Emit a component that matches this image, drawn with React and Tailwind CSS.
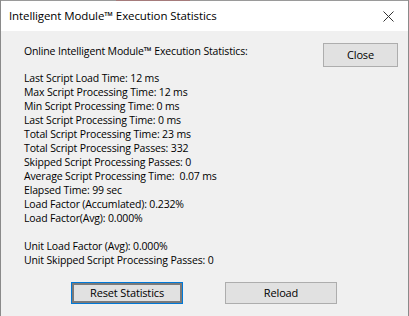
import React from "react";

const stats = [
  "Last Script Load Time: 12 ms",
  "Max Script Processing Time: 12 ms",
  "Min Script Processing Time: 0 ms",
  "Last Script Processing Time: 0 ms",
  "Total Script Processing Time: 23 ms",
  "Total Script Processing Passes: 332",
  "Skipped Script Processing Passes: 0",
  "Average Script Processing Time:  0.07 ms",
  "Elapsed Time: 99 sec",
  "Load Factor (Accumlated): 0.232%",
  "Load Factor(Avg): 0.000%",
];

const unitStats = [
  "Unit Load Factor (Avg): 0.000%",
  "Unit Skipped Script Processing Passes: 0",
];

const App = () => {
  return (
    <div
      className="w-[409px] h-[316px] flex flex-col bg-[#f0f0f0] border-l border-r border-[#8a8a8a] overflow-hidden text-black"
      style={{ fontFamily: '"Open Sans", "Noto Sans", sans-serif' }}
    >
      {/* window top edge */}
      <div className="flex h-px shrink-0">
        <div className="w-[115px] bg-[#9a9a9a]" />
        <div className="w-[74px] bg-[#a57b7b]" />
        <div className="flex-1 bg-[#9a9a9a]" />
      </div>

      <div className="h-[30px] bg-white flex items-center justify-between pl-2 pr-3 shrink-0">
        <span className="text-[11.5px] tracking-[-0.1px]">
          Intelligent Module™ Execution Statistics
        </span>
        <svg width="11" height="11" viewBox="0 0 11 11" className="mr-[2px]">
          <path d="M0.5 0.5 L10.5 10.5 M10.5 0.5 L0.5 10.5" stroke="#333" strokeWidth="1" />
        </svg>
      </div>

      <div className="flex-1 flex flex-col pl-[23px] pr-[10px] text-[10.5px] leading-[14px] tracking-[-0.15px]">
        <div className="flex justify-between items-start mt-[12px]">
          <div className="mt-[1px]">Online Intelligent Module™ Execution Statistics:</div>
          <button className="w-[75px] h-[24px] bg-[#e1e1e1] border border-[#adadad] text-[11px]">
            Close
          </button>
        </div>

        <div className="mt-[4px] flex flex-col">
          {stats.map((s) => (
            <div key={s} className="whitespace-pre">{s}</div>
          ))}
        </div>

        <div className="mt-[14px] flex flex-col">
          {unitStats.map((s) => (
            <div key={s}>{s}</div>
          ))}
        </div>

        <div className="flex mt-[15px] pl-[47px] gap-[42px]">
          <button className="w-[112px] h-[22px] border border-[#0078d7] p-0">
            <div className="w-full h-full border-2 border-[#7a7a7a] bg-[#e1e1e1] flex items-center justify-center text-[11px]">
              Reset Statistics
            </div>
          </button>
          <button className="w-[112px] h-[22px] bg-[#e1e1e1] border border-[#adadad] text-[11px]">
            Reload
          </button>
        </div>
      </div>
    </div>
  );
};

export default App;
